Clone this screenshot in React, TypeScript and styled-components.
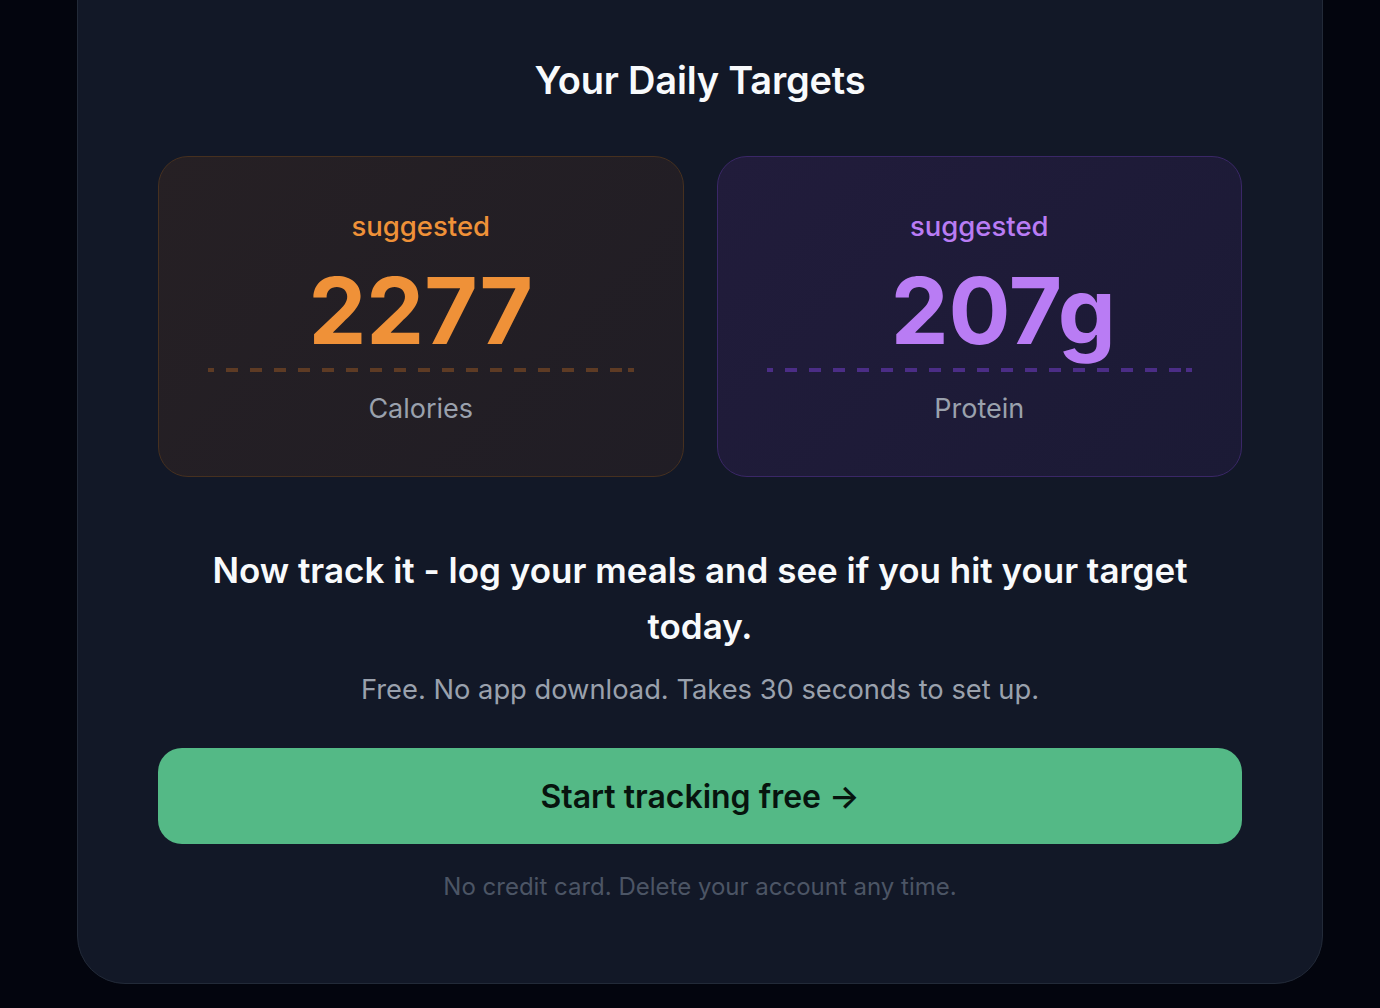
import styled, { createGlobalStyle } from 'styled-components';

const GlobalStyle = createGlobalStyle`
	html, body {
		margin: 0;
		padding: 0;
		background: #03050e;
	}
	body {
		font-family: Inter, 'Noto Sans', 'Liberation Sans', sans-serif;
		-webkit-font-smoothing: antialiased;
	}
`;

type Tone = 'orange' | 'purple';

const tones = {
	orange: {
		accent: '#ef9138',
		bg: 'linear-gradient(135deg, #262024 0%, #201d25 100%)',
		border: '#46301f',
		dash: '#5e3b24',
	},
	purple: {
		accent: '#b97cf4',
		bg: 'linear-gradient(135deg, #211c3b 0%, #1b1a35 100%)',
		border: '#3a2767',
		dash: '#4b2d86',
	},
};

const App = () => {
	return (
		<>
			<GlobalStyle />
			<Page>
				<Card>
					<Title>Your Daily Targets</Title>
					<Targets>
						<Target tone="orange">
							<Suggested tone="orange">suggested</Suggested>
							<Value tone="orange">2277</Value>
							<Dashes tone="orange" />
							<Label>Calories</Label>
						</Target>
						<Target tone="purple">
							<Suggested tone="purple">suggested</Suggested>
							<Value tone="purple" shift={48}>
								207g
							</Value>
							<Dashes tone="purple" />
							<Label>Protein</Label>
						</Target>
					</Targets>
					<Pitch>Now track it - log your meals and see if you hit your target today.</Pitch>
					<Subline>Free. No app download. Takes 30 seconds to set up.</Subline>
					<StartButton>Start tracking free →</StartButton>
					<Fineprint>No credit card. Delete your account any time.</Fineprint>
				</Card>
			</Page>
		</>
	);
};

export const Page = styled.div`
	padding: 0 57px 25px 77px;
`;

export const Card = styled.div`
	width: 1246px;
	box-sizing: border-box;
	background: #121827;
	border: 1.5px solid #222a38;
	border-radius: 48px;
	margin-top: -60px;
	padding: 117px 80px 81px;
	display: flex;
	flex-direction: column;
	align-items: center;
`;

export const Title = styled.h2`
	margin: 0;
	color: #f8fafc;
	font-size: 38px;
	font-weight: 600;
	line-height: 44px;
	letter-spacing: -0.2px;
`;

export const Targets = styled.div`
	width: 100%;
	display: grid;
	grid-template-columns: 1fr 1fr;
	gap: 33px;
	margin-top: 54px;
`;

export const Target = styled.div<{ tone: Tone }>`
	height: 321px;
	box-sizing: border-box;
	border-radius: 30px;
	border: 1.5px solid ${({ tone }) => tones[tone].border};
	background: ${({ tone }) => tones[tone].bg};
	padding: 49px 49px 0;
	display: flex;
	flex-direction: column;
	align-items: center;
`;

export const Suggested = styled.div<{ tone: Tone }>`
	color: ${({ tone }) => tones[tone].accent};
	font-size: 27.5px;
	font-weight: 500;
	line-height: 40px;
`;

export const Value = styled.div<{ tone: Tone; shift?: number }>`
	color: ${({ tone }) => tones[tone].accent};
	font-size: 92px;
	font-weight: 700;
	line-height: 96px;
	margin-top: 17px;
	padding-left: ${({ shift }) => shift ?? 0}px;
`;

export const Dashes = styled.div<{ tone: Tone }>`
	width: 100%;
	height: 4px;
	margin-top: 9px;
	background-image: repeating-linear-gradient(
		90deg,
		${({ tone }) => tones[tone].dash} 0 12px,
		transparent 12px 24px
	);
	background-position: -6px 0;
`;

export const Label = styled.div`
	margin-top: 19px;
	color: #9aa1ad;
	font-size: 27px;
	line-height: 36px;
`;

export const Pitch = styled.p`
	margin: 65px 0 0;
	color: #f8fafc;
	font-size: 35px;
	font-weight: 600;
	line-height: 56px;
	text-align: center;
	max-width: 1000px;
`;

export const Subline = styled.p`
	margin: 18px 0 0;
	color: #9aa1ad;
	font-size: 27.3px;
	line-height: 36px;
	text-align: center;
`;

export const StartButton = styled.button`
	width: 100%;
	height: 96px;
	margin-top: 40px;
	border: none;
	border-radius: 24px;
	background: #54b986;
	color: #07140e;
	font-family: inherit;
	font-size: 32px;
	font-weight: 600;
	cursor: pointer;
`;

export const Fineprint = styled.p`
	margin: 28px 0 0;
	color: #4c5565;
	font-size: 24px;
	line-height: 30px;
	text-align: center;
`;

export default App;
